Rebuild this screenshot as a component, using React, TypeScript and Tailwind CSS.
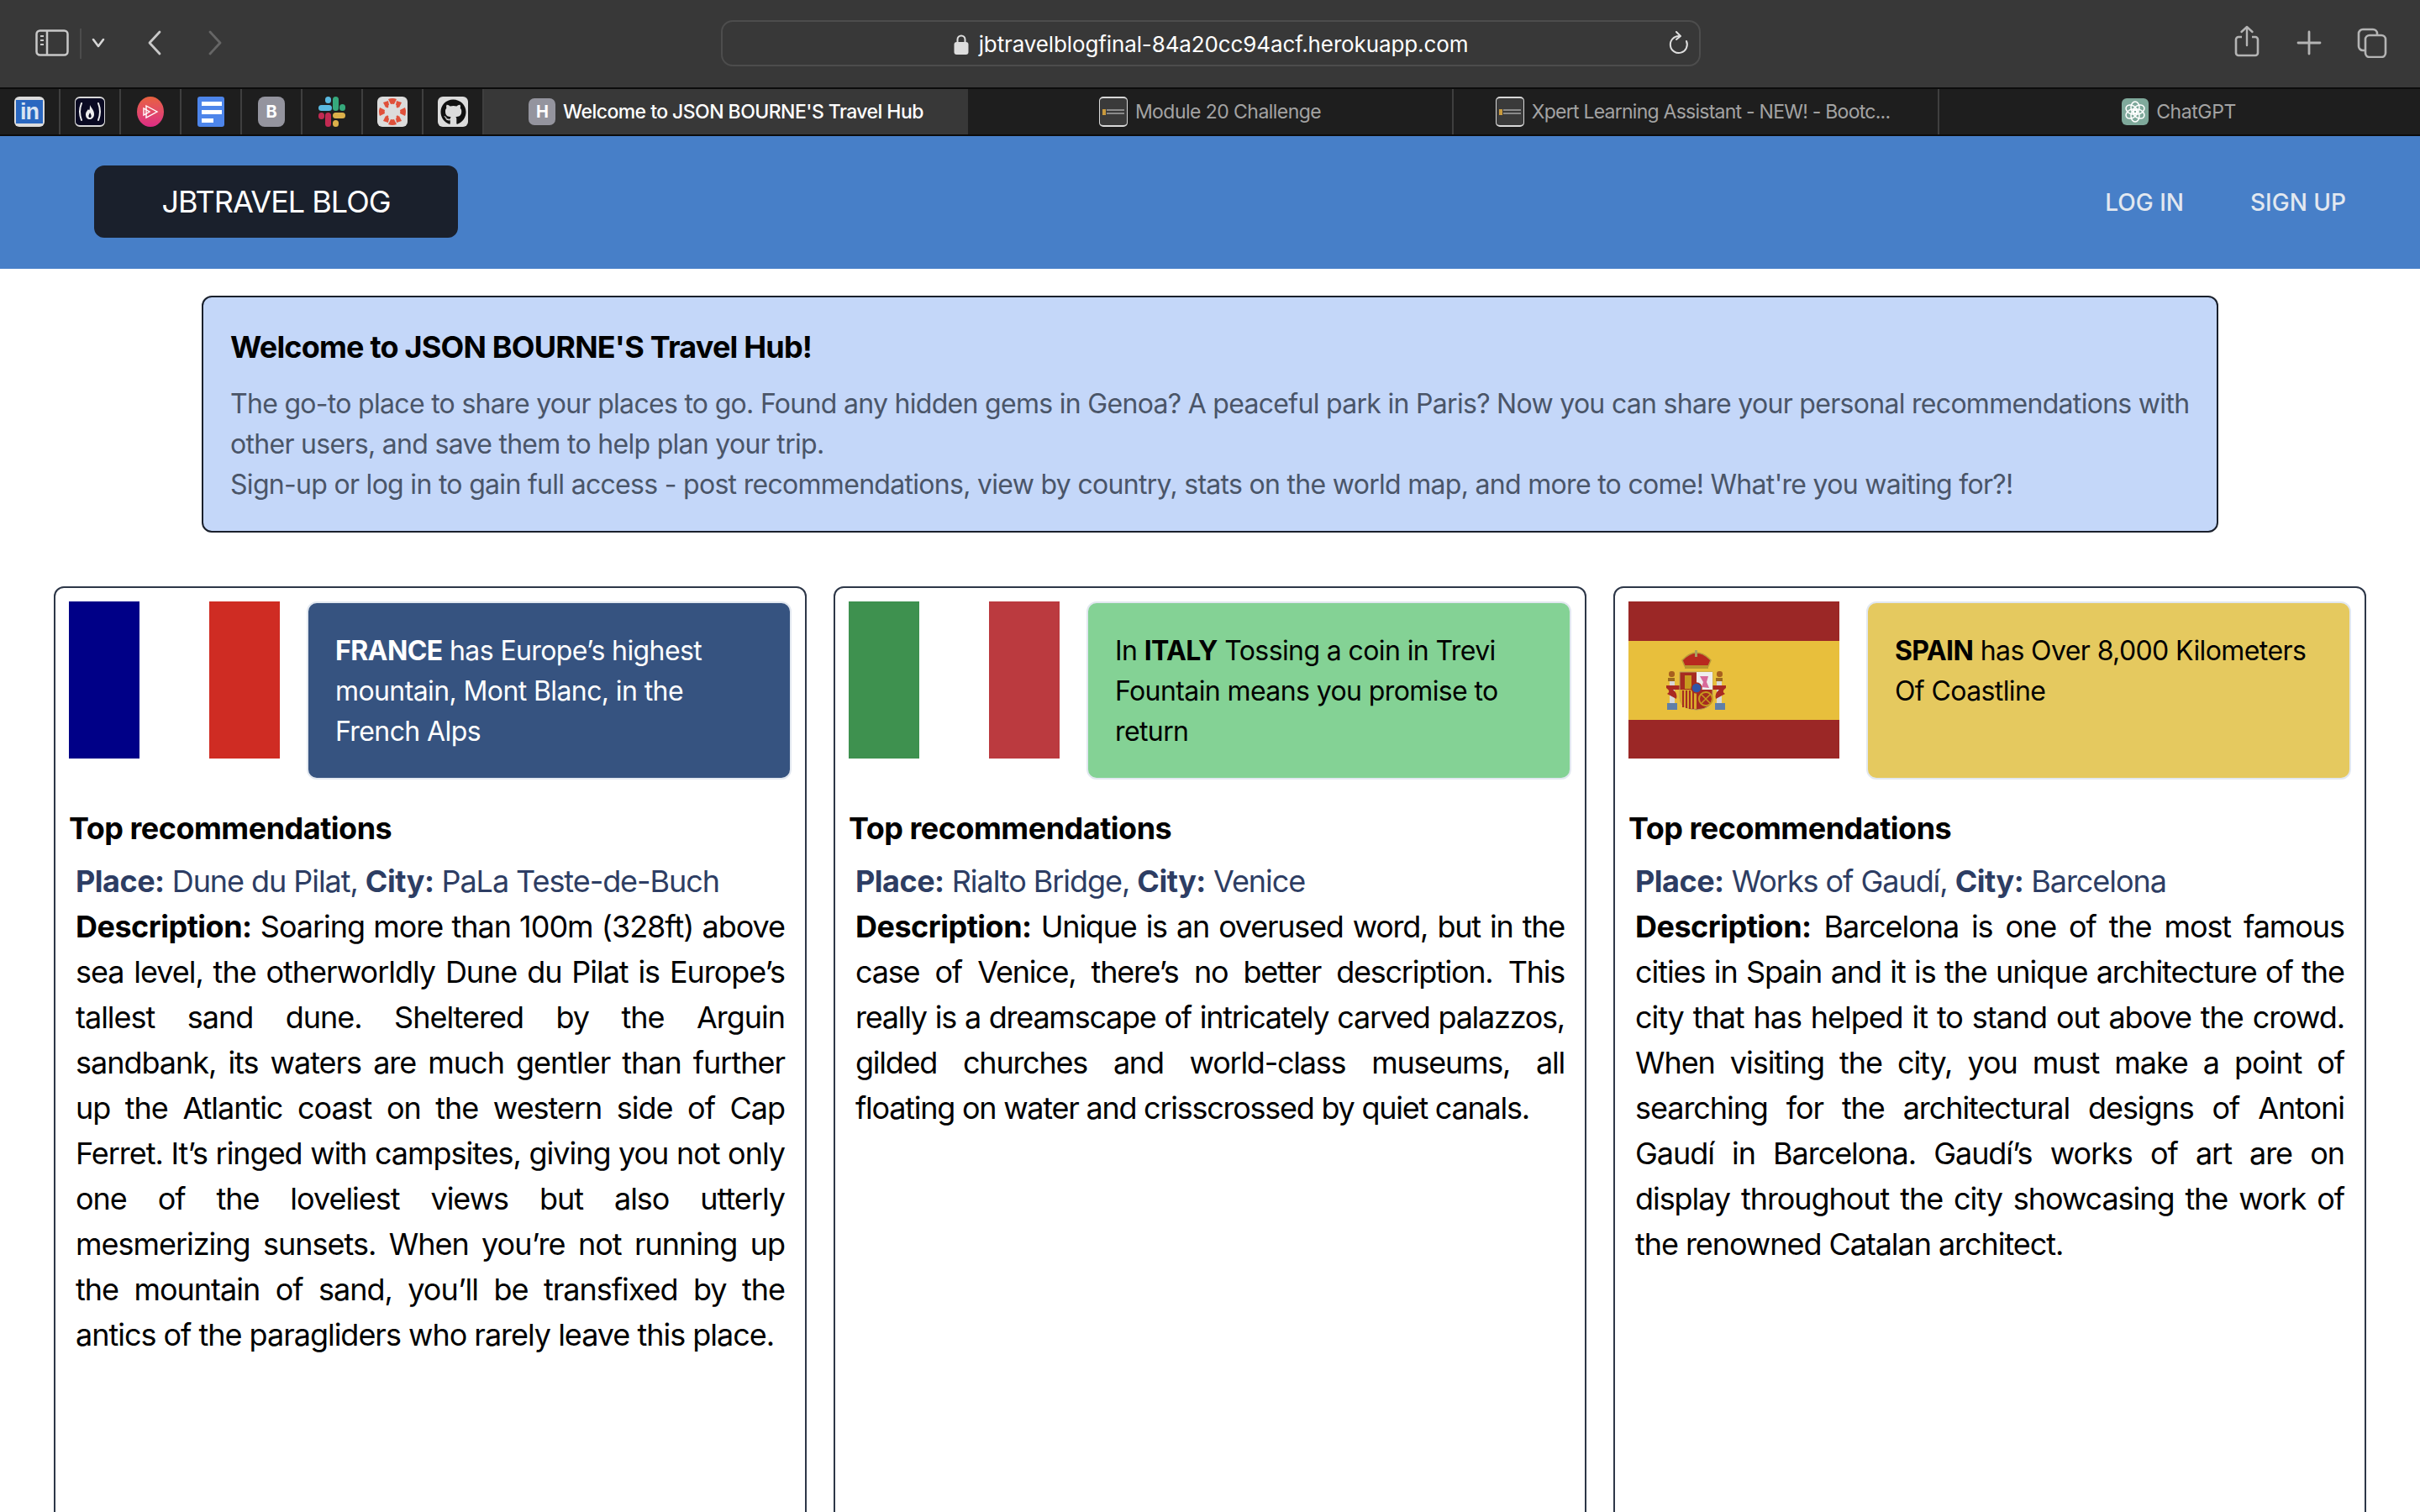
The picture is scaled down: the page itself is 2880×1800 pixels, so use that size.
import React from "react";
import { FaGithub } from "react-icons/fa";

function Sep() { return <div className="w-[2px] h-full bg-[#3f3f3f] shrink-0" />; }

function Fav({ children }: { children?: React.ReactNode }) {
  return <div className="w-[36px] h-[36px] rounded-[6px] bg-[#dcdcdc] shrink-0 flex items-center justify-center overflow-hidden">{children}</div>;
}

function PinnedIcons() {
  const icons: React.ReactNode[] = [
    <Fav key="li"><div className="w-[32px] h-[28px] bg-[#2a67c0] text-[#d9e4f2] font-bold text-[27px] leading-[28px] text-center tracking-[-1px] [font-family:'Liberation_Sans',sans-serif]">in</div></Fav>,
    <div key="fcc" className="w-[36px] h-[36px] rounded-[6px] bg-[#0a0a23] border-y-[2px] border-x-[1px] border-[#d8d8d8] shrink-0 flex items-center justify-center overflow-hidden">
      <svg width="30" height="28" viewBox="0 0 30 28" fill="none">
        <path d="M5 4 Q1 14 5 24M25 4 Q29 14 25 24" stroke="#eee" strokeWidth="2" strokeLinecap="round" />
        <path d="M15 6 C17 10 20 12 20 17 C20 21 17 23 15 23 C12 23 10 21 10 17 C10 14 12 13 13 11 C14 13 15 13 15 6Z" fill="#eee" />
        <path d="M15 15 C16 17 17 18 16.5 20 C16 21.5 14 21.5 13.5 20 C13 18 14.5 17 15 15Z" fill="#0a0a23" />
      </svg>
    </div>,
    <div key="ps" className="w-[32px] h-[36px] rounded-[50%] bg-gradient-to-b from-[#e8613c] to-[#dd2a84] flex items-center justify-center shrink-0">
      <svg width="20" height="20" viewBox="0 0 20 20" fill="none" stroke="#fff" strokeWidth="1.4"><path d="M5 3 L18 10 L5 17Z" /><path d="M2 6 L2 14 L9 10Z" /></svg>
    </div>,
    <div key="doc" className="w-[32px] h-[36px] rounded-[3px] bg-[#4d85ea] flex flex-col justify-center gap-[5px] pl-[5px] shrink-0">
      <div className="w-[24px] h-[5px] bg-white" /><div className="w-[24px] h-[5px] bg-white" /><div className="w-[14px] h-[5px] bg-white" />
    </div>,
    <div key="b" className="w-[32px] h-[36px] rounded-[8px] bg-[#94949e] text-white font-bold text-[20px] flex items-center justify-center shrink-0">B</div>,
    <svg key="sl" width="32" height="36" viewBox="0 0 32 36" className="shrink-0">
      <rect x="17" y="0" width="7" height="17" rx="3.5" fill="#36a97c" /><rect x="25" y="9" width="7" height="8" rx="3.5" fill="#36a97c" />
      <rect x="0" y="10" width="16" height="7" rx="3.5" fill="#5ab9e0" /><rect x="8" y="0" width="7" height="8" rx="3.5" fill="#5ab9e0" />
      <rect x="8" y="19" width="7" height="17" rx="3.5" fill="#c22a52" /><rect x="0" y="19" width="7" height="8" rx="3.5" fill="#c22a52" />
      <rect x="17" y="19" width="15" height="7" rx="3.5" fill="#dcb04a" /><rect x="17" y="28" width="7" height="8" rx="3.5" fill="#dcb04a" />
    </svg>,
    <Fav key="canvas"><svg width="32" height="32" viewBox="0 0 32 32" fill="#e0503a">
      <path d="M11 1 Q16 -1 21 1 L18 7 Q16 6.4 14 7Z" /><path d="M11 31 Q16 33 21 31 L18 25 Q16 25.6 14 25Z" />
      <path d="M1 11 Q-1 16 1 21 L7 18 Q6.4 16 7 14Z" /><path d="M31 11 Q33 16 31 21 L25 18 Q25.6 16 25 14Z" />
      <path d="M5 5 L11 3 L12 8 L8 11Z" /><path d="M27 5 L21 3 L20 8 L24 11Z" /><path d="M5 27 L11 29 L12 24 L8 21Z" /><path d="M27 27 L21 29 L20 24 L24 21Z" />
      <circle cx="10" cy="10" r="1.4" /><circle cx="22" cy="10" r="1.4" /><circle cx="10" cy="22" r="1.4" /><circle cx="22" cy="22" r="1.4" />
    </svg></Fav>,
    <Fav key="gh"><FaGithub className="text-[#111] w-[31px] h-[31px]" /></Fav>,
  ];
  return (
    <div className="flex h-full shrink-0 w-[576px] bg-[#1e1e1e]">
      {icons.map((ic) => (
        <React.Fragment key={(ic as React.ReactElement).key as string}>
          <div className="w-[70px] h-full flex items-center justify-center shrink-0">{ic}</div>
          <Sep />
        </React.Fragment>
      ))}
    </div>
  );
}

function UniFav() {
  return (
    <div className="w-[34px] h-[36px] rounded-[5px] bg-[#3a3a3a] border-y-[2px] border-x-[1px] border-[#d8d8d8] flex items-center gap-[1px] justify-center shrink-0">
      <div className="w-[4px] h-[7px] bg-[#c99a3d]" />
      <div className="flex flex-col gap-[2px]"><div className="w-[21px] h-[2px] bg-[#8a8a8a]" /><div className="w-[21px] h-[2px] bg-[#8a8a8a]" /></div>
    </div>
  );
}

function Tab({ icon, text, active, extra = "tracking-[-0.55px]" }: { icon: React.ReactNode; text: string; active?: boolean; extra?: string }) {
  return (
    <div className={"h-full w-[576px] shrink-0 flex items-center justify-center gap-[9px] text-[23px] " + (active ? "bg-[#383838] text-white font-medium" : "bg-[#1e1e1e] text-[#a3a3a3]") + " " + extra}>
      {icon}
      <span className="whitespace-nowrap">{text}</span>
    </div>
  );
}

function Toolbar() {
  return (
    <div className="h-[104px] bg-[#383838] flex items-start shrink-0 relative">
      <svg width="40" height="32" viewBox="0 0 40 32" fill="none" className="ml-[42px] mt-[35px] shrink-0">
        <rect x="1.5" y="1.5" width="37" height="29" rx="4" stroke="#c8c8c8" strokeWidth="2.5" />
        <path d="M14 2V30" stroke="#c8c8c8" strokeWidth="2.5" />
        <path d="M6 8h4M6 13h4M6 18h4" stroke="#c8c8c8" strokeWidth="2" />
      </svg>
      <div className="w-[2px] h-[36px] bg-[#4c4c4c] ml-[13px] mt-[34px] shrink-0" />
      <svg width="16" height="12" viewBox="0 0 16 12" fill="none" className="ml-[12px] mt-[45px] shrink-0"><path d="M2 2 L8 10 L14 2" stroke="#d6d6d6" strokeWidth="2.6" strokeLinecap="round" strokeLinejoin="round" /></svg>
      <svg width="18" height="30" viewBox="0 0 18 30" fill="none" className="ml-[50px] mt-[36px] shrink-0"><path d="M15 2 L3 15 L15 28" stroke="#c8c8c8" strokeWidth="2.8" strokeLinecap="round" strokeLinejoin="round" /></svg>
      <svg width="18" height="30" viewBox="0 0 18 30" fill="none" className="ml-[54px] mt-[36px] shrink-0"><path d="M3 2 L15 15 L3 28" stroke="#666" strokeWidth="2.8" strokeLinecap="round" strokeLinejoin="round" /></svg>
      <div className="ml-[593px] mt-[24px] w-[1166px] h-[55px] rounded-[14px] border-[2px] border-[#4d4d4d] flex items-center relative shrink-0">
        <div className="mx-auto flex items-center gap-[12px] text-[26px] tracking-[-0.12px] text-white pt-[2px]">
          <svg width="18" height="26" viewBox="0 0 18 26" fill="none"><path d="M4.5 11V7a4.5 4.5 0 0 1 9 0v4" stroke="#dedede" strokeWidth="2" /><rect x="0.5" y="10" width="17" height="15" rx="3" fill="#dedede" /></svg>
          <span className="whitespace-nowrap">jbtravelblogfinal-84a20cc94acf.herokuapp.com</span>
        </div>
        <svg width="24" height="28" viewBox="0 0 24 28" fill="none" className="absolute right-[12px] top-[11px]"><path d="M12 6 A10 10 0 1 0 21 12" stroke="#dedede" strokeWidth="2" strokeLinecap="round" /><path d="M9 1 L14 6 L9 10" stroke="#dedede" strokeWidth="2" strokeLinecap="round" strokeLinejoin="round" /></svg>
      </div>
      <svg width="30" height="38" viewBox="0 0 30 38" fill="none" className="ml-[635px] mt-[30px] shrink-0">
        <path d="M9 14H5a3 3 0 0 0-3 3v16a3 3 0 0 0 3 3h20a3 3 0 0 0 3-3V17a3 3 0 0 0-3-3h-4" stroke="#b4b4b4" strokeWidth="2.6" />
        <path d="M15 24V2M8.5 8 L15 2 L21.5 8" stroke="#b4b4b4" strokeWidth="2.4" strokeLinecap="round" strokeLinejoin="round" />
      </svg>
      <svg width="30" height="30" viewBox="0 0 30 30" fill="none" className="ml-[44px] mt-[36px] shrink-0"><path d="M15 2V28M2 15H28" stroke="#b4b4b4" strokeWidth="2.8" strokeLinecap="round" /></svg>
      <svg width="36" height="36" viewBox="0 0 36 36" fill="none" className="ml-[42px] mt-[33px] shrink-0">
        <rect x="10" y="9" width="24" height="26" rx="5" stroke="#b4b4b4" strokeWidth="2.6" />
        <path d="M10 27H7a5 5 0 0 1-5-5V7a5 5 0 0 1 5-5h12a5 5 0 0 1 5 5v2" stroke="#b4b4b4" strokeWidth="2.6" />
      </svg>
    </div>
  );
}

function TabBar() {
  return (
    <div className="h-[58px] shrink-0 flex border-y-[2px] border-[#0c0c0c] overflow-hidden bg-[#1e1e1e]">
      <PinnedIcons />
      <Tab active text="Welcome to JSON BOURNE'S Travel Hub" icon={<div className="w-[32px] h-[32px] rounded-[7px] bg-[#94949e] text-white text-[20px] font-bold flex items-center justify-center shrink-0">H</div>} />
      <Tab text="Module 20 Challenge" icon={<UniFav />} />
      <Sep />
      <Tab text="Xpert Learning Assistant - NEW! - Bootc..." extra="tracking-[-0.75px] pr-[7px]" icon={<UniFav />} />
      <Sep />
      <Tab text="ChatGPT" extra="tracking-[-0.4px] pr-[6px]" icon={
        <div className="w-[32px] h-[32px] rounded-[6px] bg-[#7fa99b] flex items-center justify-center shrink-0">
          <svg width="26" height="26" viewBox="0 0 26 26" fill="none" stroke="#fff" strokeWidth="1.5">
            <ellipse cx="13" cy="8" rx="5" ry="7" /><ellipse cx="13" cy="8" rx="5" ry="7" transform="rotate(60 13 13)" /><ellipse cx="13" cy="8" rx="5" ry="7" transform="rotate(120 13 13)" /><ellipse cx="13" cy="8" rx="5" ry="7" transform="rotate(180 13 13)" /><ellipse cx="13" cy="8" rx="5" ry="7" transform="rotate(240 13 13)" /><ellipse cx="13" cy="8" rx="5" ry="7" transform="rotate(300 13 13)" />
          </svg>
        </div>} />
    </div>
  );
}

function Nav() {
  return (
    <div className="h-[158px] bg-[#477fc8] shrink-0 flex items-center justify-between pl-[112px] pr-[88px]">
      <div className="w-[433px] h-[86px] mb-[2px] bg-[#1a202c] rounded-[12px] flex items-center justify-center text-white text-[36px] tracking-[-1px]">JBTRAVEL BLOG</div>
      <div className="flex gap-[79px] text-[#e2e8f0] text-[28px] font-medium">
        <span>LOG IN</span><span>SIGN UP</span>
      </div>
    </div>
  );
}

function Tri({ a, b, c }: { a: string; b: string; c: string }) {
  return (
    <div className="w-[251px] h-[187px] flex shrink-0">
      <div className={"flex-1 " + a} /><div className={"flex-1 " + b} /><div className={"flex-1 " + c} />
    </div>
  );
}

function Spain() {
  return (
    <div className="w-[251px] h-[187px] flex flex-col shrink-0 relative">
      <div className="h-[47px] bg-[#9b2726]" />
      <div className="flex-1 bg-[#e8bf3c]" />
      <div className="h-[46px] bg-[#9b2726]" />
      <svg width="72" height="72" viewBox="0 0 72 72" className="absolute left-[45px] top-[58px]">
        <path d="M19 12 Q36 -6 53 12 L50 19 H22Z" fill="#b8291f" stroke="#b89a3a" strokeWidth="1.5" />
        <rect x="34" y="0" width="3" height="8" fill="#a8a060" />
        <rect x="22" y="18" width="28" height="4" fill="#b8962e" />
        <rect x="2" y="33" width="8" height="4" fill="#9c6a1e" /><rect x="59" y="33" width="8" height="4" fill="#9c6a1e" />
        <rect x="3" y="25" width="7" height="7" rx="3" fill="#a8601e" /><rect x="60" y="25" width="7" height="7" rx="3" fill="#a8601e" />
        <rect x="4" y="37" width="6" height="26" fill="#d8d8d8" /><rect x="60" y="37" width="6" height="26" fill="#d8d8d8" />
        <rect x="1" y="63" width="12" height="8" fill="#5f7fa8" /><rect x="58" y="63" width="12" height="8" fill="#5f7fa8" />
        <path d="M0 42 H16 V47 H8 Q14 52 12 58 L1 52 Q6 49 0 45Z" fill="#a92a22" /><path d="M71 42 H55 V47 H63 Q57 52 59 58 L70 52 Q65 49 71 45Z" fill="#a92a22" />
        <path d="M16 26 H55 V56 Q55 70 36 71 Q16 70 16 56Z" fill="#a62c20" stroke="#b8a45a" />
        <rect x="36" y="26" width="19" height="21" fill="#eee" />
        <path d="M40 31 L50 31 L48 38 L51 45 L42 44 L44 38Z" fill="#d86a9a" />
        <path d="M22 30 h8 v16 h-8Z" fill="#c79a1e" />
        <path d="M16 47 H36 V70 Q16 70 16 56Z" fill="#d9a92c" />
        <path d="M20 48V68M24 48V69M28 48V70M32 48V70" stroke="#a62c20" strokeWidth="2" />
        <circle cx="47" cy="58" r="8" fill="none" stroke="#c79a1e" strokeWidth="2" />
        <path d="M42 53 L52 63M52 53 L42 63" stroke="#c79a1e" strokeWidth="1.5" />
        <circle cx="36" cy="45" r="6" fill="#2f56a8" stroke="#a62c20" strokeWidth="1.5" />
      </svg>
    </div>
  );
}

type CardProps = {
  flag: React.ReactNode; boxClass: string; fact: React.ReactNode;
  place: string; city: string; desc: string; descClass: string;
};

function Card({ flag, boxClass, fact, place, city, desc, descClass }: CardProps) {
  return (
    <div className="w-[896px] h-[1300px] shrink-0 border-[2px] border-[#2d3748] rounded-[12px] pt-[16px] px-[16px]">
      <div className="flex gap-[32px] items-start">
        {flag}
        <div className={"flex-1 h-[212px] rounded-[12px] border-[2px] border-[#e2e8f0] px-[32px] pt-[33px] text-[32px] leading-[48px] tracking-[-0.6px] " + boxClass}>{fact}</div>
      </div>
      <div className="mt-[31px] text-[36px] leading-[54px] font-bold text-black tracking-[-0.5px]">Top recommendations</div>
      <div className="px-[8px] mt-[9px] text-[36px] leading-[54px] text-black">
        <div className="text-[#2d3d63] tracking-[-1.06px]"><b className="font-bold tracking-[-0.5px]">Place:</b> {place}, <b className="font-bold tracking-[-0.5px]">City:</b> {city}</div>
        <p className={"text-justify " + descClass}><b className="font-bold tracking-[-0.5px]">Description:</b> {desc}</p>
      </div>
    </div>
  );
}

export default function App() {
  return (
    <div className="w-[2880px] h-[1800px] overflow-hidden flex flex-col bg-white [font-family:Inter,'Liberation_Sans',sans-serif]">
      <Toolbar />
      <TabBar />
      <Nav />
      <div className="mt-[32px] mx-[240px] h-[282px] shrink-0 border-[2px] border-[#1a202c] rounded-[12px] bg-[#c4d7f9] pl-[32px] pr-[24px] pt-[32px]">
        <div className="text-[36px] leading-[54px] font-bold text-black tracking-[-0.8px]">Welcome to JSON BOURNE'S Travel Hub!</div>
        <p className="mt-[17px] text-[32px] leading-[48px] text-[#4a5568] tracking-[-0.7px]">
          The go-to place to share your places to go. Found any hidden gems in Genoa? A peaceful park in Paris? Now you can share your personal recommendations with other users, and save them to help plan your trip.
          <br />Sign-up or log in to gain full access - post recommendations, view by country, stats on the world map, and more to come! What're you waiting for?!
        </p>
      </div>
      <div className="mt-[64px] px-[64px] flex justify-between">
        <Card
          flag={<Tri a="bg-[#000087]" b="bg-white" c="bg-[#cf2c23]" />}
          boxClass="bg-[#365380] text-white"
          fact={<><b>FRANCE</b> has Europe’s highest mountain, Mont Blanc, in the French Alps</>}
          place="Dune du Pilat" city="PaLa Teste-de-Buch"
          descClass="tracking-[-1.02px]"
          desc="Soaring more than 100m (328ft) above sea level, the otherworldly Dune du Pilat is Europe’s tallest sand dune. Sheltered by the Arguin sandbank, its waters are much gentler than further up the Atlantic coast on the western side of Cap Ferret. It’s ringed with campsites, giving you not only one of the loveliest views but also utterly mesmerizing sunsets. When you’re not running up the mountain of sand, you’ll be transfixed by the antics of the paragliders who rarely leave this place."
        />
        <Card
          flag={<Tri a="bg-[#3e914f]" b="bg-white" c="bg-[#bb3a3f]" />}
          boxClass="bg-[#84d295] text-black"
          fact={<>In <b>ITALY</b> Tossing a coin in Trevi Fountain means you promise to return</>}
          place="Rialto Bridge" city="Venice"
          descClass="tracking-[-1.25px]"
          desc="Unique is an overused word, but in the case of Venice, there’s no better description. This really is a dreamscape of intricately carved palazzos, gilded churches and world-class museums, all floating on water and crisscrossed by quiet canals."
        />
        <Card
          flag={<Spain />}
          boxClass="bg-[#e5c95f] text-black"
          fact={<><b>SPAIN</b> has Over 8,000 Kilometers Of Coastline</>}
          place="Works of Gaudí" city="Barcelona"
          descClass="tracking-[-1.06px]"
          desc="Barcelona is one of the most famous cities in Spain and it is the unique architecture of the city that has helped it to stand out above the crowd. When visiting the city, you must make a point of searching for the architectural designs of Antoni Gaudí in Barcelona. Gaudí’s works of art are on display throughout the city showcasing the work of the renowned Catalan architect."
        />
      </div>
    </div>
  );
}
